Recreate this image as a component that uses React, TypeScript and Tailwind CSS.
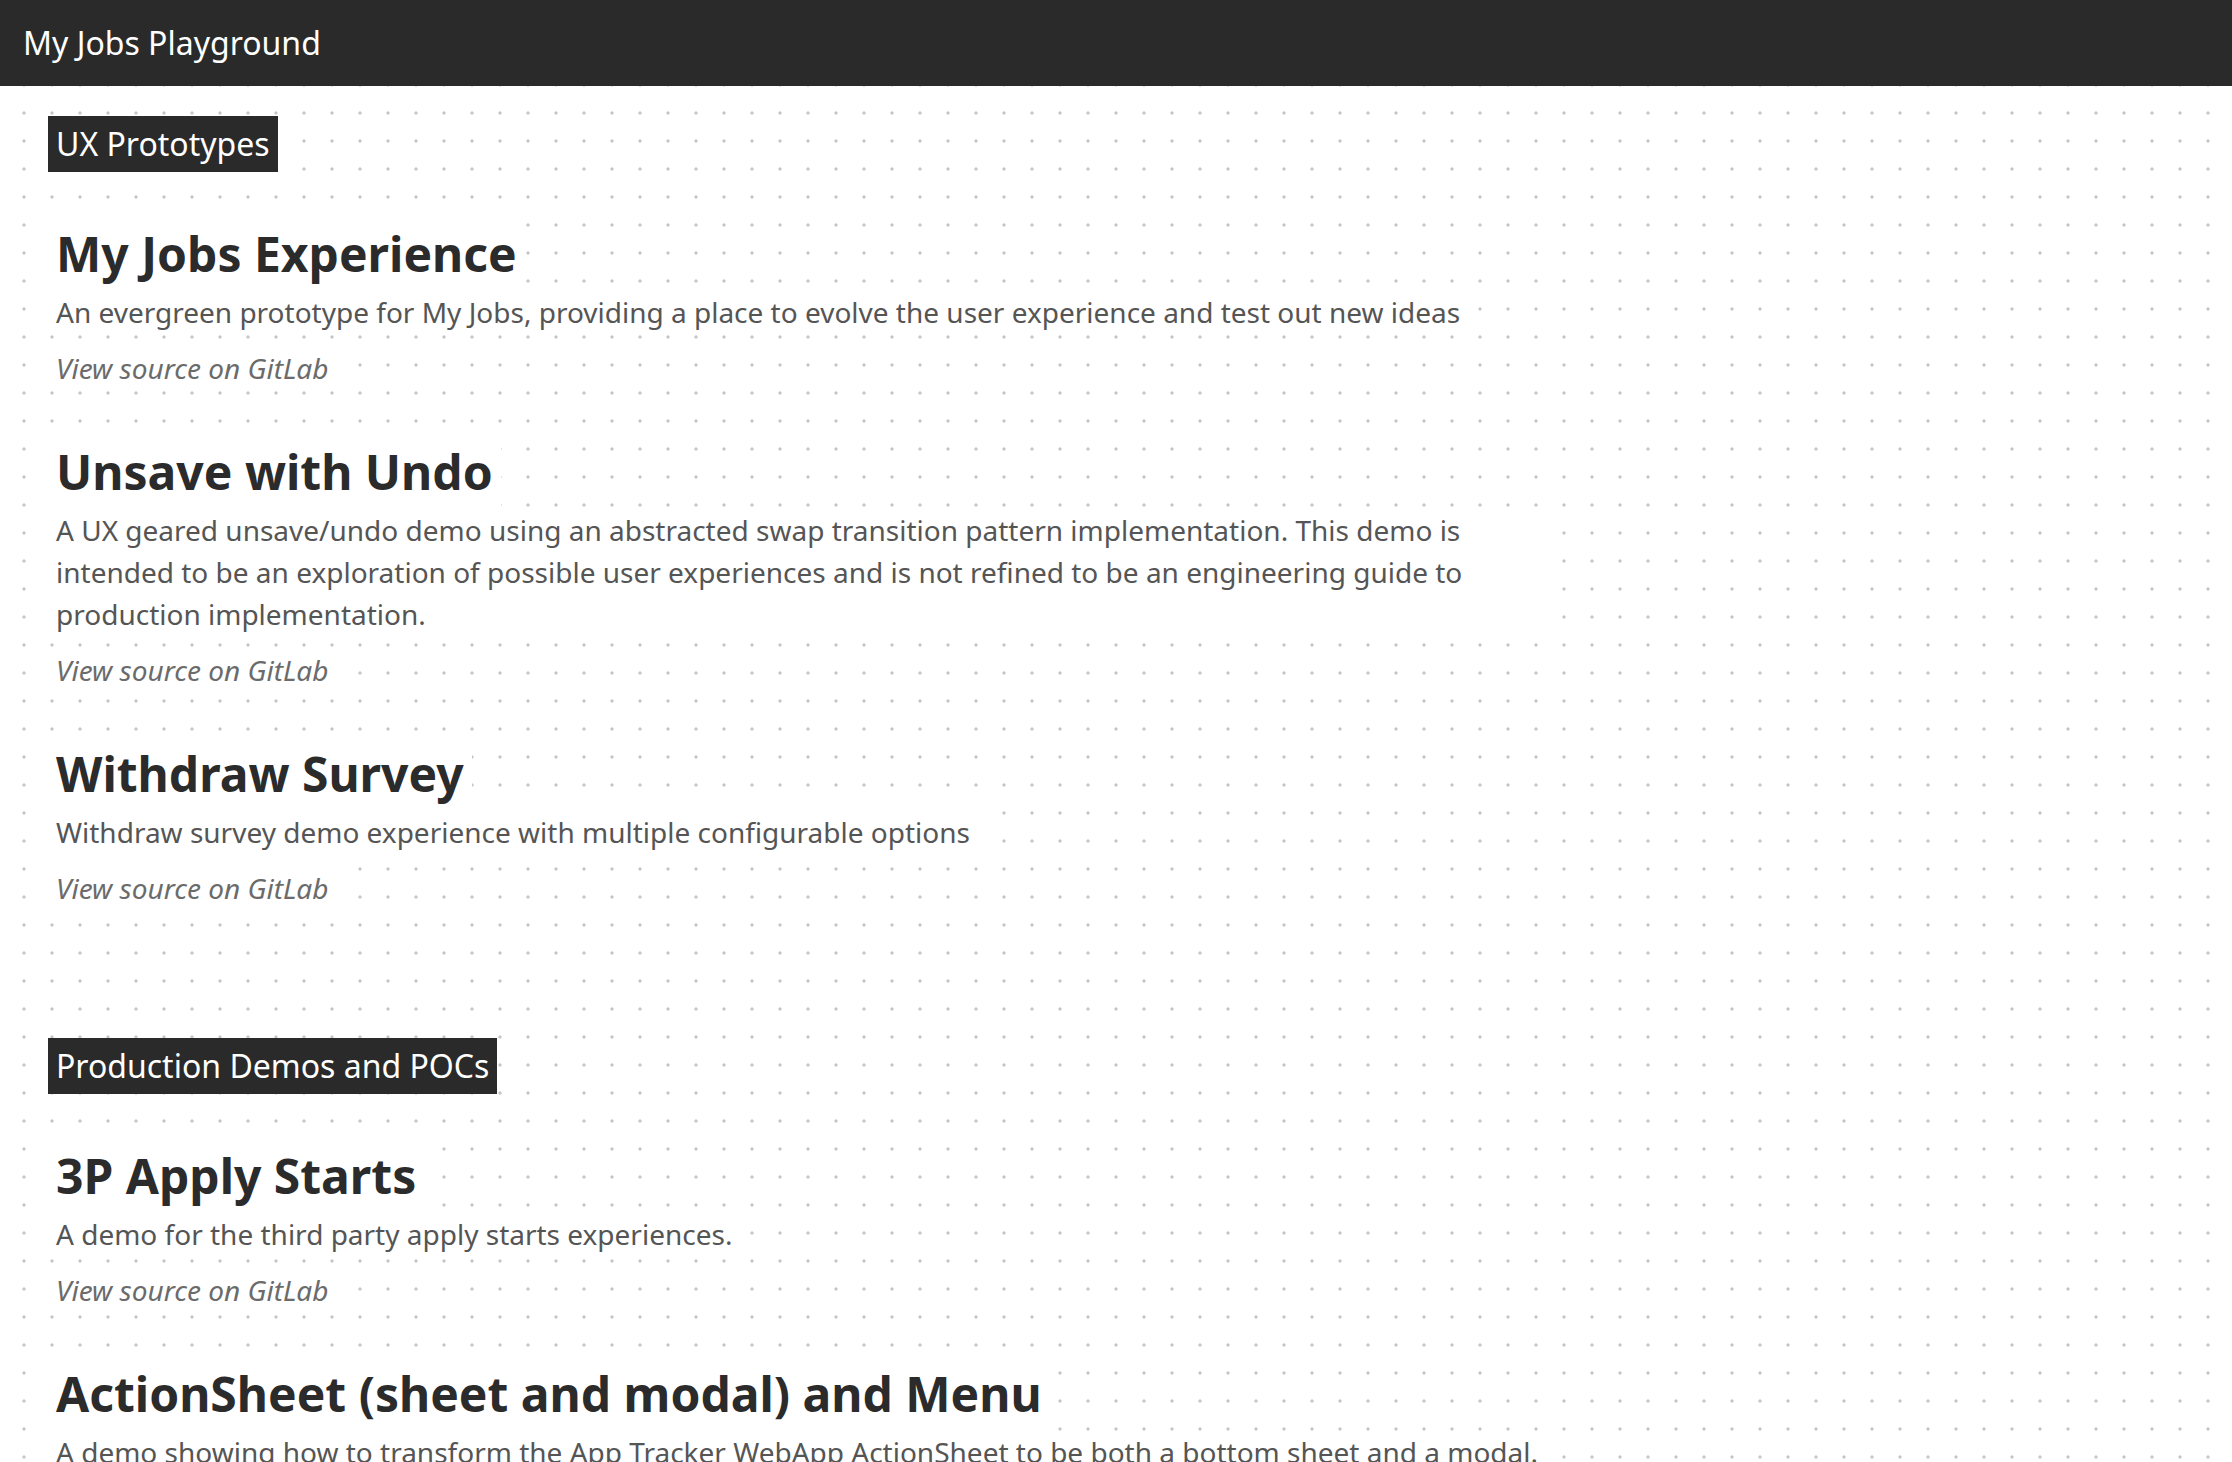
const sections = [
  {
    title: "UX Prototypes",
    items: [
      {
        name: "My Jobs Experience",
        desc: "An evergreen prototype for My Jobs, providing a place to evolve the user experience and test out new ideas",
      },
      {
        name: "Unsave with Undo",
        desc: "A UX geared unsave/undo demo using an abstracted swap transition pattern implementation. This demo is intended to be an exploration of possible user experiences and is not refined to be an engineering guide to production implementation.",
      },
      {
        name: "Withdraw Survey",
        desc: "Withdraw survey demo experience with multiple configurable options",
      },
    ],
  },
  {
    title: "Production Demos and POCs",
    items: [
      {
        name: "3P Apply Starts",
        desc: "A demo for the third party apply starts experiences.",
      },
      {
        name: "ActionSheet (sheet and modal) and Menu",
        desc: "A demo showing how to transform the App Tracker WebApp ActionSheet to be both a bottom sheet and a modal.",
      },
    ],
  },
];

const App = () => {
  return (
    <div className="min-h-screen bg-white bg-[radial-gradient(circle,#c6c6c6_1.3px,transparent_1.9px)] bg-[length:28px_28px] bg-[position:10px_15px] font-['Noto_Sans',sans-serif]">
      <header className="flex items-center h-[86px] px-[23px] bg-[#2a2a2a]">
        <h1 className="text-[32px] leading-[48px] text-white">My Jobs Playground</h1>
      </header>

      <main className="pt-[30px] px-[48px] pb-16">
        {sections.map((section) => (
          <section key={section.title} className="mb-[129px]">
            <h2 className="w-fit px-2 py-1 mb-[44px] bg-[#2a2a2a] text-white text-[32px] leading-[48px]">
              {section.title}
            </h2>
            {section.items.map((item) => (
              <div key={item.name} className="mb-[45px]">
                <h3 className="w-fit px-2 bg-white text-[#2b2b2b] text-[48px] leading-[75px] font-bold">
                  {item.name}
                </h3>
                <p className="w-fit max-w-[1510px] px-2 pb-[2px] bg-white text-[#555555] text-[28px] leading-[42px]">
                  {item.desc}
                </p>
                <a className="block w-fit mt-[12px] px-2 bg-white text-[#6b6b6b] text-[28px] leading-[42px] italic cursor-pointer">
                  View source on GitLab
                </a>
              </div>
            ))}
          </section>
        ))}
      </main>
    </div>
  );
};

export default App;
